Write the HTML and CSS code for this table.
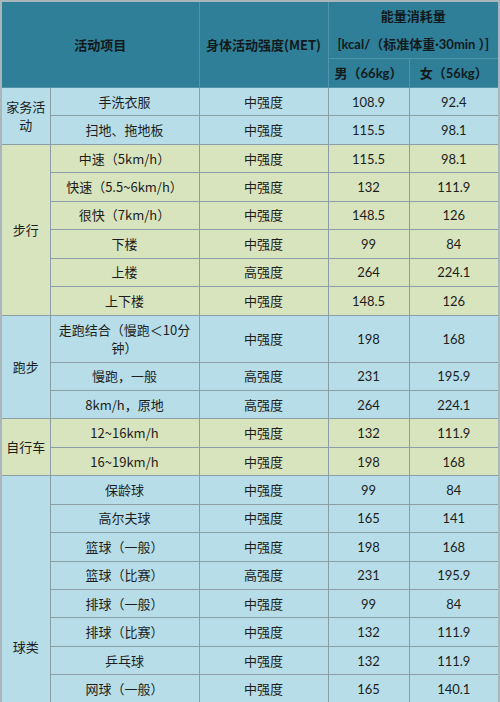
FILE: index.html
```html
<!DOCTYPE html>
<html lang="zh-CN">
<head>
<meta charset="utf-8">
<link rel="stylesheet" href="styles.css">
</head>
<body>
<table class="tbl">
  <colgroup>
    <col class="c1"><col class="c2"><col class="c3"><col class="c4"><col class="c5">
  </colgroup>
  <thead>
    <tr class="h1">
      <th colspan="2" rowspan="2">活动项目</th>
      <th rowspan="2">身体活动强度(MET)</th>
      <th colspan="2" class="energy"><div>能量消耗量</div><div class="num">[kcal/（标准体重·30min ）]</div></th>
    </tr>
    <tr class="h2">
      <th class="sub">男（<span class="num">66kg</span>）</th>
      <th class="sub">女（<span class="num">56kg</span>）</th>
    </tr>
  </thead>
  <tbody>
    <tr class="blue"><td rowspan="2" class="grp">家务活动</td><td>手洗衣服</td><td>中强度</td><td class="num">108.9</td><td class="num">92.4</td></tr>
    <tr class="blue"><td>扫地、拖地板</td><td>中强度</td><td class="num">115.5</td><td class="num">98.1</td></tr>

    <tr class="green"><td rowspan="6" class="grp">步行</td><td>中速（5km/h）</td><td>中强度</td><td class="num">115.5</td><td class="num">98.1</td></tr>
    <tr class="green"><td>快速（5.5~6km/h）</td><td>中强度</td><td class="num">132</td><td class="num">111.9</td></tr>
    <tr class="green"><td>很快（7km/h）</td><td>中强度</td><td class="num">148.5</td><td class="num">126</td></tr>
    <tr class="green"><td>下楼</td><td>中强度</td><td class="num">99</td><td class="num">84</td></tr>
    <tr class="green"><td>上楼</td><td>高强度</td><td class="num">264</td><td class="num">224.1</td></tr>
    <tr class="green"><td>上下楼</td><td>中强度</td><td class="num">148.5</td><td class="num">126</td></tr>

    <tr class="blue tall"><td rowspan="3" class="grp">跑步</td><td class="two">走跑结合（慢跑＜10分<br>钟）</td><td>中强度</td><td class="num">198</td><td class="num">168</td></tr>
    <tr class="blue"><td>慢跑，一般</td><td>高强度</td><td class="num">231</td><td class="num">195.9</td></tr>
    <tr class="blue"><td>8km/h，原地</td><td>高强度</td><td class="num">264</td><td class="num">224.1</td></tr>

    <tr class="green"><td rowspan="2" class="grp">自行车</td><td>12~16km/h</td><td>中强度</td><td class="num">132</td><td class="num">111.9</td></tr>
    <tr class="green"><td>16~19km/h</td><td>中强度</td><td class="num">198</td><td class="num">168</td></tr>

    <tr class="blue"><td rowspan="8" class="grp low">球类</td><td>保龄球</td><td>中强度</td><td class="num">99</td><td class="num">84</td></tr>
    <tr class="blue"><td>高尔夫球</td><td>中强度</td><td class="num">165</td><td class="num">141</td></tr>
    <tr class="blue"><td>篮球（一般）</td><td>中强度</td><td class="num">198</td><td class="num">168</td></tr>
    <tr class="blue"><td>篮球（比赛）</td><td>高强度</td><td class="num">231</td><td class="num">195.9</td></tr>
    <tr class="blue"><td>排球（一般）</td><td>中强度</td><td class="num">99</td><td class="num">84</td></tr>
    <tr class="blue"><td>排球（比赛）</td><td>中强度</td><td class="num">132</td><td class="num">111.9</td></tr>
    <tr class="blue"><td>乒乓球</td><td>中强度</td><td class="num">132</td><td class="num">111.9</td></tr>
    <tr class="blue"><td>网球（一般）</td><td>中强度</td><td class="num">165</td><td class="num">140.1</td></tr>
  </tbody>
</table>
</body>
</html>
```
FILE: styles.css
```css
html, body {
  margin: 0;
  padding: 0;
  background: #c9d3d6;
}
.tbl {
  width: 500px;
  table-layout: fixed;
  border-collapse: collapse;
  border: 2px solid #a9b7bc;
  font-family: "Noto Sans CJK SC", "Liberation Sans", sans-serif;
  font-size: 13px;
  color: #1d1d1d;
}
.c1 { width: 49px; }
.c2 { width: 149px; }
.c3 { width: 129px; }
.c4 { width: 81px; }
.c5 { width: 90px; }

th, td {
  border: 1px solid #8c9ea5;
  text-align: center;
  vertical-align: middle;
  padding: 0 3px;
  line-height: 18px;
  overflow: hidden;
}
thead th {
  background: #2e7f97;
  color: #121a1d;
  font-weight: bold;
  border-color: #4f95a9;
}
.h1 th { height: 54px; }
.h1 .energy { line-height: 28px; }
.h2 th { height: 28px; }
.num {
  font-family: Lato, "Noto Sans CJK SC", sans-serif;
}
tbody td { height: 27.45px; }
tbody tr.tall td { height: 46px; }
.blue td { background: #b6dde8; }
.green td { background: #d8e4bd; }
.grp { padding: 0 4px; }
.two { padding: 0 2px; white-space: nowrap; }
.low { vertical-align: top; padding-top: 162px; }
```
